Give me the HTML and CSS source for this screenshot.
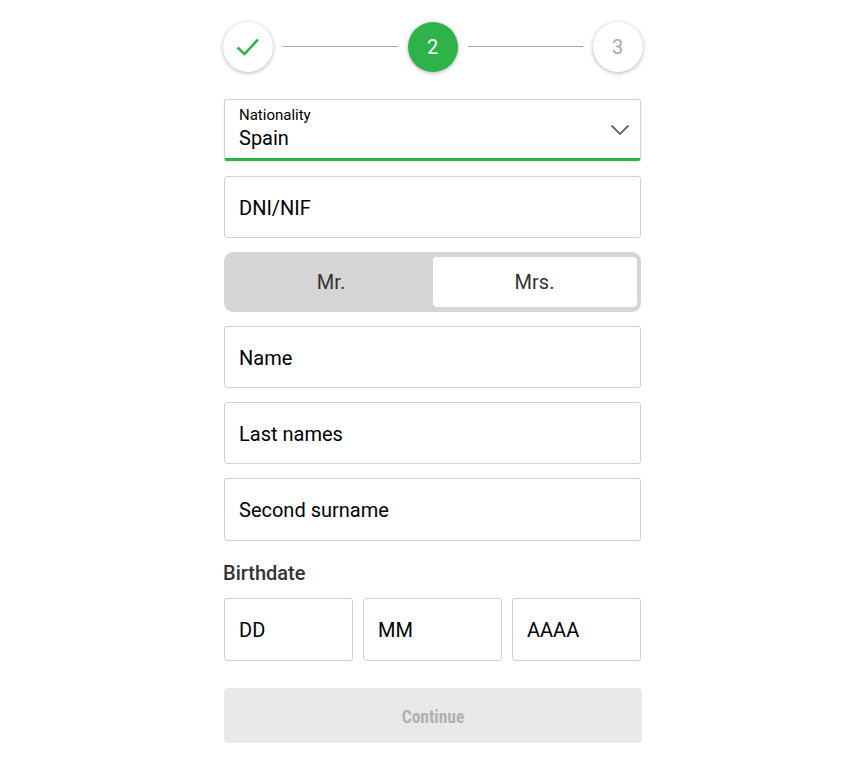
FILE: index.html
```html
<!DOCTYPE html>
<html lang="en">
<head>
<meta charset="utf-8">
<title>Registration</title>
<link rel="stylesheet" href="styles.css">
</head>
<body>
<main class="form">
  <div class="stepper">
    <div class="step step-done">
      <svg class="check" width="26" height="20" viewBox="0 0 26 20"><path d="M2.5 10.5 L9.5 17 L23 2.5" fill="none" stroke="#2db34a" stroke-width="2.5"/></svg>
    </div>
    <div class="line"></div>
    <div class="step step-active"><span class="digit">2</span></div>
    <div class="line"></div>
    <div class="step step-next"><span class="digit">3</span></div>
  </div>

  <div class="field field-select">
    <div class="select-text">
      <span class="small-label">Nationality</span>
      <span class="value">Spain</span>
    </div>
    <svg class="chevron" width="20" height="12" viewBox="0 0 20 12"><path d="M1.5 1.5 L10 10 L18.5 1.5" fill="none" stroke="#666" stroke-width="1.8"/></svg>
  </div>

  <div class="field h62">DNI/NIF</div>

  <div class="toggle">
    <div class="toggle-opt">Mr.</div>
    <div class="toggle-opt toggle-on">Mrs.</div>
  </div>

  <div class="field h62">Name</div>
  <div class="field h62">Last names</div>
  <div class="field h63">Second surname</div>

  <div class="section-label">Birthdate</div>
  <div class="date-row">
    <div class="field date date-d">DD</div>
    <div class="field date date-m">MM</div>
    <div class="field date date-y">AAAA</div>
  </div>

  <button class="continue" type="button">Continue</button>
</main>
</body>
</html>
```
FILE: styles.css
```css
* { box-sizing: border-box; }
html, body { margin: 0; padding: 0; background: #fff; }
body { font-family: Roboto, "Liberation Sans", sans-serif; color: #000; }
.form { width: 418px; margin-left: 224px; padding-top: 22px; display: flex; flex-direction: column; }

.stepper { display: flex; align-items: center; margin-left: -1px; width: 420px; height: 50px; }
.step { width: 50px; height: 50px; border-radius: 50%; flex: none; display: flex; align-items: center; justify-content: center; font-size: 20px; box-shadow: 0 1px 4px rgba(0,0,0,.3); background: #fff; }
.digit { margin-right: 1px; }
.step-active { background: #2db34a; color: #fff; }
.step-next { color: #a8a8a8; }
.line { flex: 1; height: 1px; background: #a6a6a6; margin: 0 10px; position: relative; top: -1px; }

.field { width: 417px; border: 1px solid #d2d2d2; border-radius: 3px; background: #fff; display: flex; align-items: center; padding: 0 14px; font-size: 20px; color: #000; margin-bottom: 14px; }
.h62 { height: 62px; padding-top: 2px; }
.h63 { height: 63px; }

.field-select { margin-top: 27px; height: 62px; justify-content: space-between; border-bottom: 3px solid #2db34a; margin-bottom: 15px; padding-right: 10px; padding-top: 0; box-shadow: 0 1px 2px rgba(0,0,0,.12); }
.select-text { display: flex; flex-direction: column; margin-top: -3px; }
.small-label { font-size: 15px; line-height: 18px; margin-bottom: 2px; }
.value { font-size: 20px; line-height: 24px; }
.chevron { position: relative; top: 1px; }

.toggle { width: 417px; height: 60px; background: #d5d5d5; border-radius: 9px; padding: 5px 4px 5px 5px; display: flex; margin-bottom: 14px; }
.toggle-opt { flex: 1; display: flex; align-items: center; justify-content: center; font-size: 20px; color: #333; border-radius: 4px; }
.toggle-on { background: #fff; flex: none; width: 204px; padding-right: 1px; }

.section-label { font-size: 20px; font-weight: 500; color: #333; line-height: 24px; margin: 6px 0 13px -1px; }
.date-row { display: flex; gap: 10px; width: 417px; }
.date { height: 63px; margin-bottom: 0; }
.date-d { width: 129px; }
.date-m { width: 139px; }
.date-y { width: 129px; }

.continue { margin-top: 27px; width: 418px; height: 55px; border: 0; border-radius: 4px; background: #e9e9e9; color: #b0b0b0; font-family: Roboto, "Liberation Sans", sans-serif; font-stretch: condensed; font-weight: 700; font-size: 17.5px; padding: 2px 0 0; }
```
